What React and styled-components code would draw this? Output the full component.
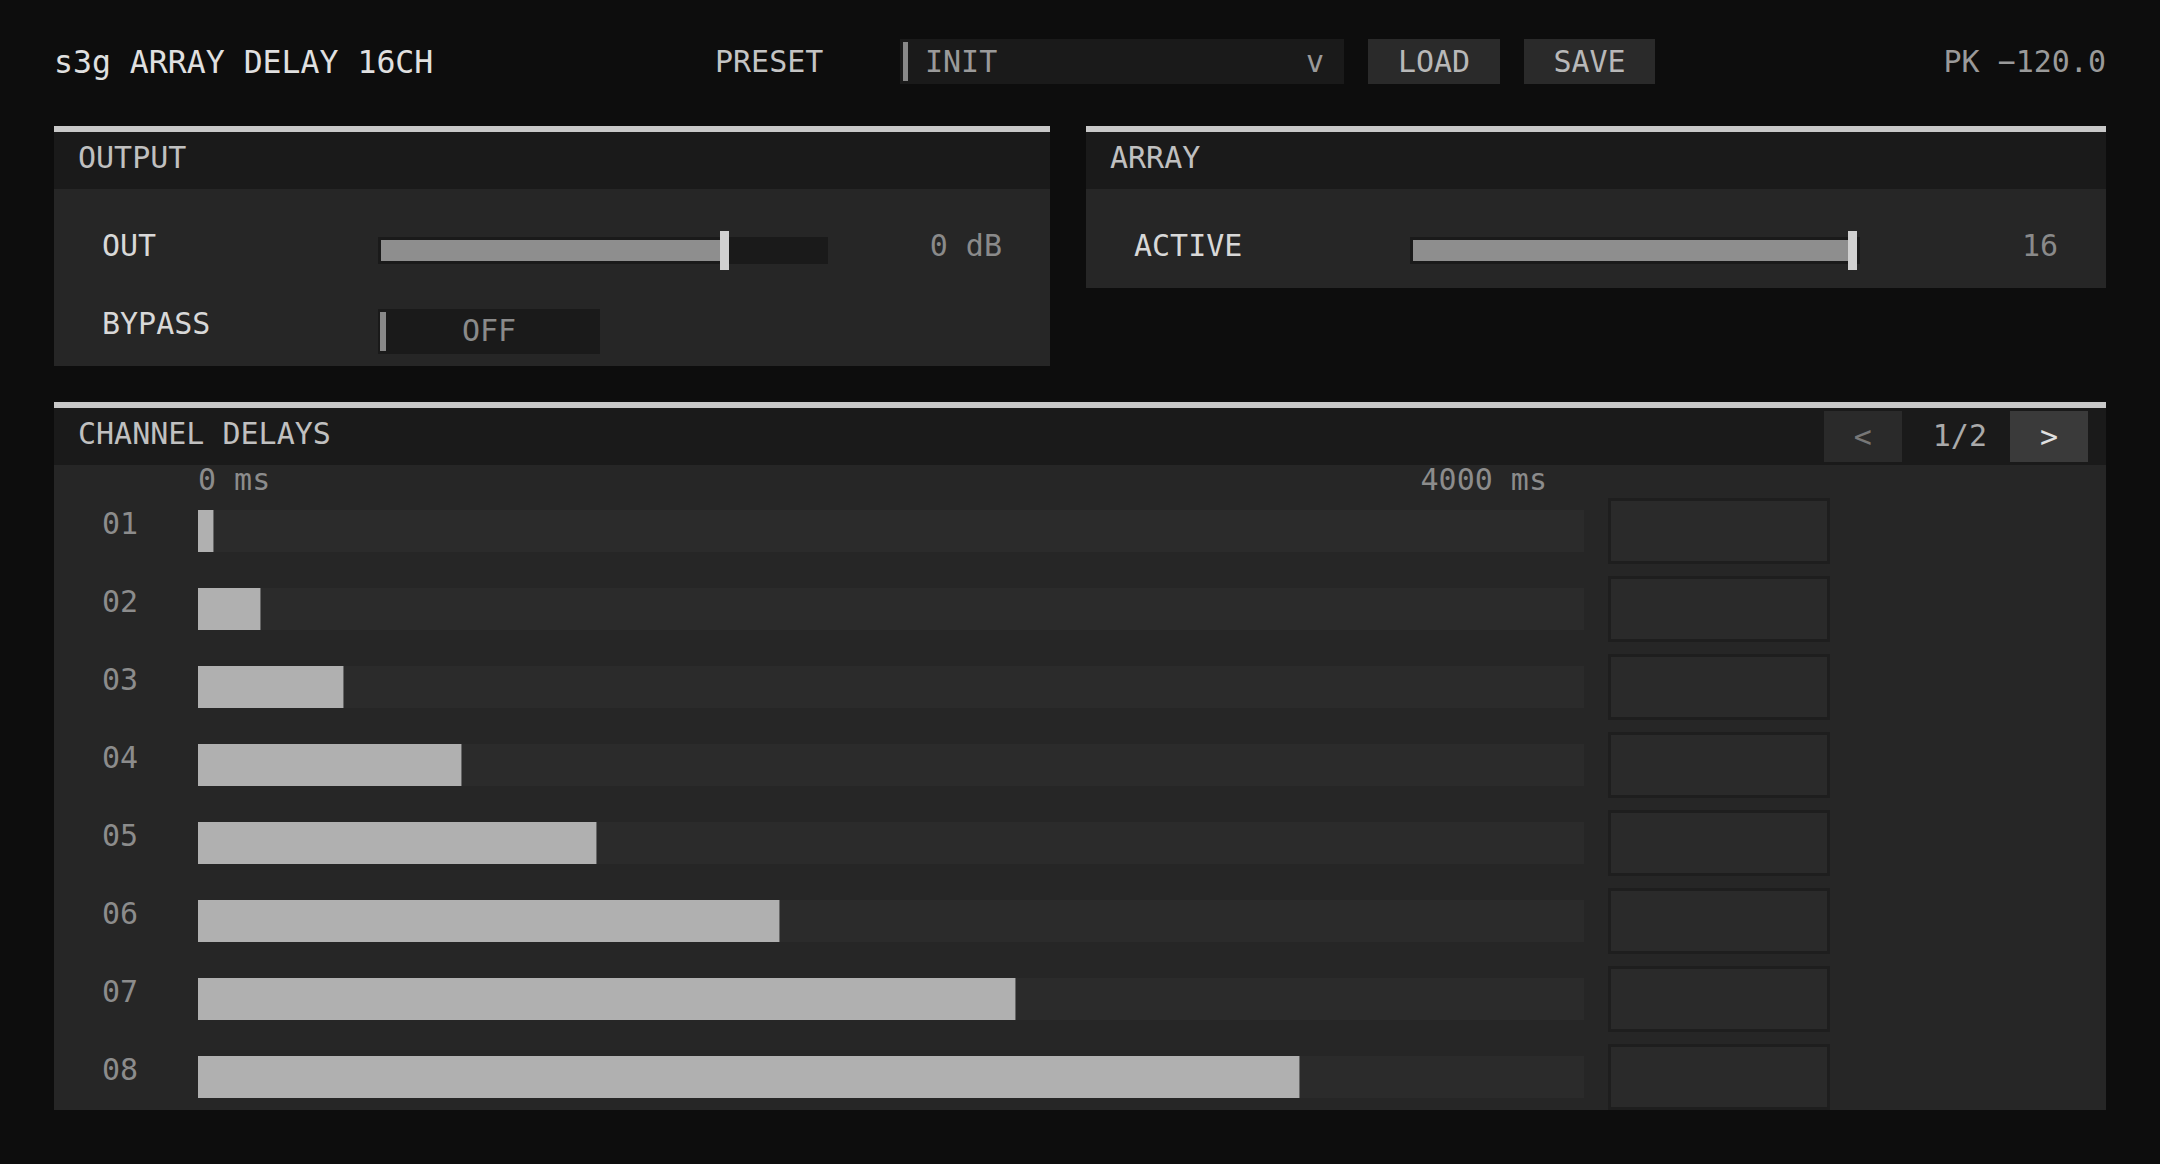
import React from 'react';
import styled, { createGlobalStyle } from 'styled-components';

const GlobalStyle = createGlobalStyle`
	html, body {
		margin: 0;
		background: #0d0d0d;
	}
	body {
		font-family: "DejaVu Sans Mono", monospace;
		font-size: 30px;
		color: #c0c0c0;
	}
`

const Page = styled.div`
	padding: 39px 54px 54px;
`

/* ---- top bar ---- */
const Header = styled.div`
	display: flex;
	align-items: center;
	height: 45px;
	margin-bottom: 42px;
`
const Title = styled.div`
	flex: 0 0 661px;
	font-size: 31.5px;
	color: #e0e0e0;
`
const PresetLabel = styled.div`
	flex: 0 0 185px;
	color: #c4c4c4;
`
const Select = styled.div`
	display: flex;
	align-items: center;
	width: 444px;
	height: 45px;
	background: #1a1a1a;
	color: #9a9a9a;
`
const Accent = styled.div`
	align-self: stretch;
	width: ${props => props.w || 5}px;
	margin: 3px 0 3px ${props => props.left || 3}px;
	background: #888;
`
const SelectText = styled.div`
	flex: 1;
	margin-left: 17px;
`
const Caret = styled.div`
	margin-right: 20px;
`
const Button = styled.div`
	display: flex;
	align-items: center;
	justify-content: center;
	width: 132px;
	height: 45px;
	margin-left: 24px;
	background: #2a2a2a;
	color: #b8b8b8;
`
const Peak = styled.div`
	margin-left: auto;
	color: #9a9a9a;
`

/* ---- panels ---- */
const TopRow = styled.div`
	display: grid;
	grid-template-columns: 996px 1fr;
	gap: 36px;
	align-items: start;
	margin-bottom: 36px;
`
const Panel = styled.div`
	background: #262626;
	border-top: 6px solid #c8c8c8;
`
const PanelHead = styled.div`
	display: flex;
	align-items: center;
	height: 57px;
	padding: 0 18px 0 24px;
	background: #1a1a1a;
	color: #c0c0c0;
`
const HeadTitle = styled.div`
	margin-bottom: 6px;
`
const ParamBody = styled.div`
	display: flex;
	flex-direction: column;
	gap: 39px;
	padding: 42px 48px ${props => props.bottom}px;
`
const ParamRow = styled.div`
	display: grid;
	grid-template-columns: 276px 450px 1fr;
	align-items: start;
`
const ParamLabel = styled.div`
	line-height: 30px;
	color: #d8d8d8;
`
const ParamValue = styled.div`
	line-height: 30px;
	text-align: right;
	color: #8a8a8a;
`
const SliderWrap = styled.div`
	position: relative;
	display: flex;
	align-items: center;
	height: 39px;
`
const SliderTrack = styled.div`
	box-sizing: border-box;
	width: 100%;
	height: 27px;
	padding: 3px;
	background: #1a1a1a;
`
const SliderFill = styled.div`
	height: 100%;
	background: #8e8e8e;
`
const SliderThumb = styled.div`
	position: absolute;
	top: 0;
	width: 9px;
	height: 39px;
	background: #d0d0d0;
`
const Toggle = styled.div`
	display: flex;
	align-items: center;
	width: 222px;
	height: 45px;
	background: #1a1a1a;
	color: #8a8a8a;
`
const ToggleText = styled.div`
	flex: 1;
	text-align: center;
	padding-right: 8px;
	margin-top: -3px;
`

/* ---- channel delays ---- */
const Pager = styled.div`
	display: flex;
	align-items: center;
	margin-left: auto;
`
const PageButton = styled.div`
	display: flex;
	align-items: center;
	justify-content: center;
	width: 78px;
	height: 51px;
	background: ${props => props.active ? '#3a3a3a' : '#2a2a2a'};
	color: ${props => props.active ? '#e0e0e0' : '#777'};
`
const PageLabel = styled.div`
	padding: 0 23px 0 31px;
	margin-bottom: 3px;
	color: #aaa;
`
const ChannelBody = styled.div`
	display: flex;
	flex-direction: column;
	gap: 12px;
	padding-left: 48px;
`
const Scale = styled.div`
	display: flex;
	justify-content: space-between;
	width: 1349px;
	height: 21px;
	margin-left: 96px;
	line-height: 30px;
	color: #8c8c8c;
`
const ChannelRow = styled.div`
	display: flex;
	align-items: center;
	height: 66px;
`
const ChannelNum = styled.div`
	align-self: flex-start;
	width: 96px;
	margin-top: 11px;
	line-height: 30px;
	color: #8c8c8c;
`
const DelayTrack = styled.div`
	width: 1386px;
	height: 42px;
	background: #2b2b2b;
`
const DelayFill = styled.div`
	box-sizing: border-box;
	height: 100%;
	background: #b0b0b0;
	border-right: 1px solid #666;
`
const ValueBox = styled.div`
	box-sizing: border-box;
	width: 222px;
	height: 66px;
	margin-left: 24px;
	border: 3px solid #1e1e1e;
	background: #2a2a2a;
`

const Slider = ({ value }) => (
	<SliderWrap>
		<SliderTrack>
			<SliderFill style={{ width: `${value * 100}%` }} />
		</SliderTrack>
		<SliderThumb style={{ left: `calc(3px + ${value} * (100% - 15px))` }} />
	</SliderWrap>
)

// delay per channel, in ms (0..4000)
const delays = [46, 182, 421, 762, 1152, 1680, 2361, 3180];

export default function App() {
	return (
		<Page>
			<GlobalStyle />
			<Header>
				<Title>s3g ARRAY DELAY 16CH</Title>
				<PresetLabel>PRESET</PresetLabel>
				<Select>
					<Accent />
					<SelectText>INIT</SelectText>
					<Caret>v</Caret>
				</Select>
				<Button>LOAD</Button>
				<Button style={{ width: 131 }}>SAVE</Button>
				<Peak>PK −120.0</Peak>
			</Header>

			<TopRow>
				<Panel>
					<PanelHead><HeadTitle>OUTPUT</HeadTitle></PanelHead>
					<ParamBody bottom={12}>
						<ParamRow>
							<ParamLabel>OUT</ParamLabel>
							<Slider value={0.779} />
							<ParamValue>0 dB</ParamValue>
						</ParamRow>
						<ParamRow>
							<ParamLabel>BYPASS</ParamLabel>
							<Toggle>
								<Accent w={6} left={2} />
								<ToggleText>OFF</ToggleText>
							</Toggle>
						</ParamRow>
					</ParamBody>
				</Panel>
				<Panel>
					<PanelHead><HeadTitle>ARRAY</HeadTitle></PanelHead>
					<ParamBody bottom={18}>
						<ParamRow>
							<ParamLabel>ACTIVE</ParamLabel>
							<Slider value={1} />
							<ParamValue>16</ParamValue>
						</ParamRow>
					</ParamBody>
				</Panel>
			</TopRow>

			<Panel>
				<PanelHead>
					<HeadTitle>CHANNEL DELAYS</HeadTitle>
					<Pager>
						<PageButton>&lt;</PageButton>
						<PageLabel>1/2</PageLabel>
						<PageButton active>&gt;</PageButton>
					</Pager>
				</PanelHead>
				<ChannelBody>
					<Scale>
						<span>0 ms</span>
						<span>4000 ms</span>
					</Scale>
					{delays.map((ms, i) => (
						<ChannelRow key={i}>
							<ChannelNum>{String(i + 1).padStart(2, '0')}</ChannelNum>
							<DelayTrack>
								<DelayFill style={{ width: `${(ms / 4000) * 100}%` }} />
							</DelayTrack>
							<ValueBox />
						</ChannelRow>
					))}
				</ChannelBody>
			</Panel>
		</Page>
	);
}
